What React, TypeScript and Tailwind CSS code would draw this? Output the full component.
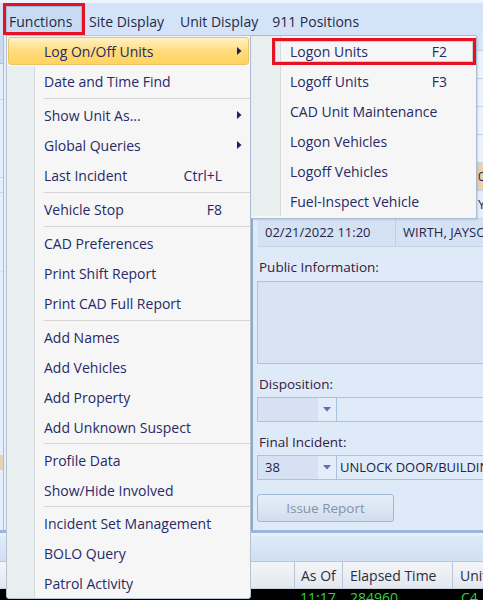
import React from "react";

type Entry =
  | { kind: "item"; label: string; shortcut?: string; arrow?: boolean; hl?: boolean }
  | { kind: "sep"; h: "h-[4px]" | "h-[3px]" };

const mainItems: Entry[] = [
  { kind: "item", label: "Log On/Off Units", arrow: true, hl: true },
  { kind: "item", label: "Date and Time Find" },
  { kind: "sep", h: "h-[4px]" },
  { kind: "item", label: "Show Unit As...", arrow: true },
  { kind: "item", label: "Global Queries", arrow: true },
  { kind: "item", label: "Last Incident", shortcut: "Ctrl+L" },
  { kind: "sep", h: "h-[4px]" },
  { kind: "item", label: "Vehicle Stop", shortcut: "F8" },
  { kind: "sep", h: "h-[4px]" },
  { kind: "item", label: "CAD Preferences" },
  { kind: "item", label: "Print Shift Report" },
  { kind: "item", label: "Print CAD Full Report" },
  { kind: "sep", h: "h-[4px]" },
  { kind: "item", label: "Add Names" },
  { kind: "item", label: "Add Vehicles" },
  { kind: "item", label: "Add Property" },
  { kind: "item", label: "Add Unknown Suspect" },
  { kind: "sep", h: "h-[3px]" },
  { kind: "item", label: "Profile Data" },
  { kind: "item", label: "Show/Hide Involved" },
  { kind: "sep", h: "h-[3px]" },
  { kind: "item", label: "Incident Set Management" },
  { kind: "item", label: "BOLO Query" },
  { kind: "item", label: "Patrol Activity" },
];

const subItems: { label: string; shortcut?: string }[] = [
  { label: "Logon Units", shortcut: "F2" },
  { label: "Logoff Units", shortcut: "F3" },
  { label: "CAD Unit Maintenance" },
  { label: "Logon Vehicles" },
  { label: "Logoff Vehicles" },
  { label: "Fuel-Inspect Vehicle" },
];

function Arrow() {
  return (
    <svg width="5" height="8" viewBox="0 0 5 8">
      <path d="M0 0 L4.5 4 L0 8 Z" fill="#18206a" />
    </svg>
  );
}

function DownTri() {
  return (
    <svg width="8" height="5" viewBox="0 0 8 5">
      <path d="M0 0 L8 0 L4 4.5 Z" fill="#5874a6" />
    </svg>
  );
}

function MainMenu() {
  return (
    <div className="absolute left-[6px] top-[35px] w-[245px] h-[564px] bg-[#f6f6f6] border border-[#b7c2cf] rounded-b-[3px] overflow-hidden text-[14px] text-[#262a66]">
      {mainItems.map((e, i) => {
        if (e.kind === "sep") {
          return (
            <div key={i} className={`flex ${e.h}`}>
              <div className="w-[28px] shrink-0 bg-[#e9eeee] border-r border-[#d6dadd]" />
              <div className="flex-1 flex items-center pl-[9px]">
                <div className="h-px w-full bg-[#d5d5d5]" />
              </div>
            </div>
          );
        }
        if (e.hl) {
          return (
            <div key={i} className="h-[30px] p-[1px]">
              <div className="h-full flex items-center rounded-[3px] border border-[#e9c46c] bg-linear-to-b from-[#fff2c6] via-[#ffdb7c] to-[#ffd45e]">
                <div className="w-[26px] shrink-0" />
                <span className="flex-1 pl-[9px] whitespace-nowrap">{e.label}</span>
                <span className="w-[26px] shrink-0 flex pl-[15px]">{e.arrow ? <Arrow /> : null}</span>
              </div>
            </div>
          );
        }
        return (
          <div key={i} className="flex h-[30px]">
            <div className="w-[28px] shrink-0 bg-[#e9eeee] border-r border-[#d6dadd]" />
            <div className="flex flex-1 items-center pl-[9px]">
              <span className="flex-1 whitespace-nowrap">{e.label}</span>
              {e.shortcut ? <span className="whitespace-nowrap">{e.shortcut}</span> : null}
              <span className="w-[28px] shrink-0 flex pl-[15px]">{e.arrow ? <Arrow /> : null}</span>
            </div>
          </div>
        );
      })}
    </div>
  );
}

function SubMenu() {
  return (
    <div className="absolute left-[250px] top-[35px] w-[227px] h-[184px] bg-[#f6f6f6] border border-[#a9bbd5] rounded-[2px] shadow-[1px_1px_2px_rgba(0,0,0,0.12)] pb-[2px] text-[14px] text-[#262a66]">
      {subItems.map((s, i) => (
        <div key={i} className="flex h-[30px]">
          <div className="w-[30px] shrink-0 bg-[#e9eeee] border-r border-[#d6dadd]" />
          <div className="flex flex-1 items-center pl-[9px]">
            <span className="flex-1 whitespace-nowrap">{s.label}</span>
            {s.shortcut ? <span className="whitespace-nowrap">{s.shortcut}</span> : null}
            <span className="w-[29px] shrink-0" />
          </div>
        </div>
      ))}
    </div>
  );
}

function MenuBar() {
  return (
    <div className="h-[35px] flex flex-col">
      <div className="h-[3px] bg-[#eef4fb]" />
      <div className="h-[32px] bg-[#d4e3f7] flex text-[14px] text-[#1f2a44]">
        <div className="ml-[3px] w-[82px] h-[32px] p-[3px] pb-0">
          <div className="h-full bg-[#c9dbf2] border border-[#a3bbdb] flex items-center pl-[2px] pt-[1px]">
            Functions
          </div>
        </div>
        <div className="ml-[4px] h-[32px] flex items-center pt-[4px] whitespace-nowrap">Site Display</div>
        <div className="ml-[16px] h-[32px] flex items-center pt-[4px] whitespace-nowrap">Unit Display</div>
        <div className="ml-[14px] h-[32px] flex items-center pt-[4px] whitespace-nowrap">911 Positions</div>
      </div>
    </div>
  );
}

function LeftPane() {
  return (
    <div className="w-[251px] shrink-0 flex bg-[#e6eef9]">
      <div className="w-[4px] flex flex-col border-r border-[#a6bfdf]">
        <div className="h-[29px] bg-[#c9dbf2] border-b border-[#a9c2e2]" />
        <div className="h-[36px] border-b border-[#c6d4e6]" />
        <div className="h-[78px] border-b border-[#c6d4e6]" />
        <div className="h-[15px] border-b border-[#c6d4e6]" />
        <div className="h-[79px] border-b border-[#d8e2ee]" />
        <div className="h-[183px]" />
        <div className="h-[15px] bg-[#e8d2b5]" />
        <div className="flex-1" />
      </div>
      <div className="flex-1" />
    </div>
  );
}

function ListRow({ bg, c1, c2, tail }: { bg: string; c1?: string; c2?: string; tail?: string }) {
  return (
    <div className={`h-[28px] flex border-b border-[#c4d4e8] ${bg}`}>
      <div className="w-[138px] shrink-0 border-r border-[#bcd0e8] flex items-center pl-[7px] whitespace-nowrap">{c1}</div>
      <div className="flex-1 flex items-center pl-[7px] whitespace-nowrap">{c2}</div>
      {tail ? <div className="absolute" /> : null}
    </div>
  );
}

function TailRow({ bg, tail }: { bg: string; tail: string }) {
  return (
    <div className={`h-[28px] flex border-b border-[#c4d4e8] ${bg}`}>
      <div className="w-[138px] shrink-0 border-r border-[#bcd0e8]" />
      <div className="flex-1 flex items-center pl-[82px] whitespace-nowrap">{tail}</div>
    </div>
  );
}

function Combo({ code, text }: { code?: string; text?: string }) {
  return (
    <div className="h-[25px] w-[260px] flex border border-[#a9c1e2] text-[13px] text-[#22223f]">
      <div className="w-[60px] bg-[#d6e2f3] flex items-center pl-[7px]">{code}</div>
      <div className="w-[19px] bg-[#e3ecf9] border-r border-[#a9c1e2] flex items-center justify-center">
        <DownTri />
      </div>
      <div className="flex-1 bg-[#e0ebfa] flex items-center pl-[3px] whitespace-nowrap">{text}</div>
    </div>
  );
}

function RightPanel() {
  return (
    <div className="flex-1 border-l-2 border-[#8eaad0] bg-[#dfeaf9] pl-[4px] overflow-hidden flex flex-col text-[13px]">
      <div className="ml-[1px] w-[260px] h-[212px] flex flex-col text-[#24244a]">
        <div className="h-[16px] bg-[#d9e6f6] border-b border-[#c4d4e8]" />
        <ListRow bg="bg-[#eef3fa]" />
        <ListRow bg="bg-[#eef3fa]" />
        <ListRow bg="bg-[#eef3fa]" />
        <ListRow bg="bg-[#eef3fa]" />
        <TailRow bg="bg-[#e9d0b0]" tail="0)" />
        <TailRow bg="bg-[#e7eef8]" tail="Y" />
        <ListRow bg="bg-[#d5e2f3]" c1="02/21/2022 11:20" c2="WIRTH, JAYSON" />
      </div>
      <div className="mt-[11px] h-[18px] flex items-center pl-[2px] text-[13.5px] text-[#33203a] whitespace-nowrap">
        Public Information:
      </div>
      <div className="mt-[5px] h-[83px] w-[260px] bg-[#d8e4f4] border border-[#a9c1e3]" />
      <div className="mt-[11px] h-[18px] flex items-center pl-[2px] text-[13.5px] text-[#33203a]">Disposition:</div>
      <div className="mt-[4px]">
        <Combo />
      </div>
      <div className="mt-[11px] h-[18px] flex items-center pl-[2px] text-[13.5px] text-[#33203a]">Final Incident:</div>
      <div className="mt-[4px]">
        <Combo code="38" text="UNLOCK DOOR/BUILDING" />
      </div>
      <div className="mt-[14px] h-[28px] w-[137px] rounded-[3px] border border-[#9fb7d6] bg-linear-to-b from-[#e6eefa] to-[#d0ddef] flex items-center justify-center text-[13.5px] text-[#8792a6]">
        Issue Report
      </div>
    </div>
  );
}

function BottomSection() {
  return (
    <div className="flex flex-col">
      <div className="h-[3px] bg-[#98b6de]" />
      <div className="h-[3px] bg-[#e8f0fb]" />
      <div className="h-[26px] bg-linear-to-b from-[#dfeafa] to-[#cfdff4] border-b border-[#b7c8de]" />
      <div className="h-[27px] flex bg-linear-to-b from-[#f3f5f8] to-[#e3e8ef] border-b border-[#c6d0dc] text-[14px] text-[#2c2c3c]">
        <div className="w-[295px] shrink-0 border-r border-[#bac6d5]" />
        <div className="w-[48px] shrink-0 border-r border-[#bac6d5] flex items-center pl-[6px] whitespace-nowrap">As Of</div>
        <div className="w-[110px] shrink-0 border-r border-[#bac6d5] flex items-center pl-[7px] whitespace-nowrap">Elapsed Time</div>
        <div className="flex-1 flex items-center pl-[7px] whitespace-nowrap">Unit</div>
      </div>
      <div className="h-[20px] flex bg-black text-[14px] leading-[18px] text-[#33d633]">
        <div className="w-[295px] shrink-0" />
        <div className="w-[48px] shrink-0 pl-[5px]">11:17</div>
        <div className="w-[110px] shrink-0 pl-[7px]">284960</div>
        <div className="flex-1 pl-[8px]">C4</div>
      </div>
    </div>
  );
}

export default function App() {
  return (
    <div className="relative w-[483px] h-[600px] overflow-hidden bg-[#dfeaf9] font-['Open_Sans',sans-serif]">
      <MenuBar />
      <div className="flex h-[495px]">
        <LeftPane />
        <RightPanel />
      </div>
      <BottomSection />
      <MainMenu />
      <SubMenu />
      <div className="absolute left-[3px] top-[3px] w-[82px] h-[32px] border-[3px] border-[#e81123]" />
      <div className="absolute left-[272px] top-[38px] w-[204px] h-[27px] border-[3px] border-[#e81123]">
        <div className="h-full border border-[#cfcfcf]" />
      </div>
    </div>
  );
}
